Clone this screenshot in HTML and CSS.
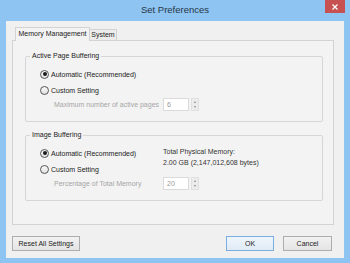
FILE: index.html
```html
<!DOCTYPE html>
<html lang="en">
<head>
    <meta charset="UTF-8">
    <title>Set Preferences</title>
    <link rel="stylesheet" href="styles.css">
</head>
<body>
    <div class="window">
        <div class="titlebar">
            <span></span>
            <span class="title">Set Preferences</span>
            <span class="close">
                <svg width="6" height="6" viewBox="0 0 6 6"><path d="M0.5 0.5L5.5 5.5M5.5 0.5L0.5 5.5" stroke="#fff" stroke-width="1.2"/></svg>
            </span>
        </div>
        <div class="client">
            <div class="tabs">
                <div class="tab active">Memory Management</div>
                <div class="tab">System</div>
            </div>
            <div class="panel">
                <fieldset class="group">
                    <legend>Active Page Buffering</legend>
                    <div class="option first"><span class="radio on"></span>Automatic (Recommended)</div>
                    <div class="option second"><span class="radio"></span>Custom Setting</div>
                    <div class="sub-label">Maximum number of active pages</div>
                    <div class="spin-field">
                        <div class="input">6</div>
                        <div class="spin"><span class="up"></span><span class="down"></span></div>
                    </div>
                </fieldset>

                <fieldset class="group lower">
                    <legend>Image Buffering</legend>
                    <div class="option first"><span class="radio on"></span>Automatic (Recommended)</div>
                    <div class="info">Total Physical Memory:<br>2.00 GB (2,147,012,608 bytes)</div>
                    <div class="option second"><span class="radio"></span>Custom Setting</div>
                    <div class="sub-label">Percentage of Total Memory</div>
                    <div class="spin-field">
                        <div class="input">20</div>
                        <div class="spin"><span class="up"></span><span class="down"></span></div>
                    </div>
                </fieldset>
            </div>
            <div class="actions">
                <button class="btn reset">Reset All Settings</button>
                <button class="btn ok">OK</button>
                <button class="btn cancel">Cancel</button>
            </div>
        </div>
    </div>
</body>
</html>
```

FILE: styles.css
```css
body {
    margin: 0;
    font-family: "Liberation Sans", Arial, sans-serif;
}
.window {
    width: 350px;
    height: 263px;
    box-sizing: border-box;
    background-color: #8ec4f2;
    padding: 0 6px 5px 6px;
    display: flex;
    flex-direction: column;
}
.titlebar {
    height: 21px;
    flex: none;
    display: grid;
    grid-template-columns: 1fr auto 1fr;
}
.title {
    font-size: 9.5px;
    line-height: 20px;
    color: #263646;
}
.close {
    justify-self: end;
    align-self: start;
    margin-right: -1px;
    width: 20px;
    height: 13px;
    background-color: #c75050;
    display: flex;
    align-items: center;
    justify-content: center;
}
.client {
    flex: 1;
    background-color: #f0f0f0;
    padding: 6px 10px 0 6px;
    display: flex;
    flex-direction: column;
    font-size: 7px;
    color: #222;
}
.tabs {
    height: 13px;
    flex: none;
    display: flex;
    align-items: flex-end;
    padding-left: 3px;
    position: relative;
    z-index: 1;
}
.tab {
    box-sizing: border-box;
    height: 11px;
    width: 28px;
    border: 1px solid #d3d3d3;
    border-bottom: none;
    background-color: #ececec;
    text-align: center;
    line-height: 10px;
    margin-left: -1px;
}
.tab.active {
    height: 14px;
    width: 75px;
    margin-left: 0;
    margin-bottom: -1px;
    background-color: #f3f3f3;
    line-height: 12px;
    position: relative;
    z-index: 1;
}
.panel {
    height: 185px;
    flex: none;
    box-sizing: border-box;
    border: 1px solid #d3d3d3;
    background-color: #f3f3f3;
    padding: 10px 11px 0 12px;
}
.group {
    margin: 0;
    width: 298px;
    box-sizing: border-box;
    padding: 5px 0 10px 4px;
    border: 1px solid #d6d6d6;
    border-radius: 2px;
    display: grid;
    grid-template-columns: 133px 1fr;
    grid-template-rows: 16px 16px 13px;
    align-items: center;
}
.group.lower {
    margin-top: 8px;
}
.group legend {
    font-size: 7px;
    line-height: 10px;
    padding: 0 2px;
    margin-left: 0;
}
.option {
    grid-column: 1;
    display: flex;
    align-items: center;
    gap: 2px;
    padding-left: 10px;
}
.option.first {
    grid-row: 1;
}
.option.second {
    grid-row: 2;
}
.radio {
    width: 9px;
    height: 9px;
    box-sizing: border-box;
    border-radius: 50%;
    border: 1px solid #555;
    background: linear-gradient(#fafafa, #e0e0e0);
    display: flex;
    align-items: center;
    justify-content: center;
}
.radio.on::after {
    content: "";
    width: 4px;
    height: 4px;
    border-radius: 50%;
    background-color: #1a1a1a;
}
.info {
    grid-column: 2;
    grid-row: 1 / 3;
    align-self: start;
    padding-top: 1px;
    line-height: 11px;
    color: #333;
}
.sub-label {
    grid-column: 1;
    grid-row: 3;
    padding-left: 24px;
    color: #a6a6a6;
}
.spin-field {
    grid-column: 2;
    grid-row: 3;
    display: flex;
    gap: 2px;
    height: 13px;
}
.input {
    width: 26px;
    box-sizing: border-box;
    border: 1px solid #dadada;
    background-color: #fff;
    color: #999;
    padding-left: 3px;
    line-height: 11px;
}
.spin {
    width: 8px;
    display: flex;
    flex-direction: column;
    border: 1px solid #e0e0e0;
    box-sizing: border-box;
    background-color: #ececec;
}
.spin span {
    flex: 1;
    display: flex;
    align-items: center;
    justify-content: center;
}
.spin .up::after {
    content: "";
    border-left: 1.5px solid transparent;
    border-right: 1.5px solid transparent;
    border-bottom: 2px solid #8a8a8a;
}
.spin .down::after {
    content: "";
    border-left: 1.5px solid transparent;
    border-right: 1.5px solid transparent;
    border-top: 2px solid #8a8a8a;
}
.actions {
    display: flex;
    margin-top: 11px;
    padding-right: 2px;
}
.btn {
    height: 15px;
    box-sizing: border-box;
    padding: 0;
    border: 1px solid #adadad;
    background: linear-gradient(#f2f2f2, #e4e4e4);
    font-family: "Liberation Sans", Arial, sans-serif;
    font-size: 7px;
    color: #222;
}
.btn.reset {
    width: 68px;
}
.btn.ok {
    width: 48px;
    margin-left: auto;
    border-color: #7aaee0;
    background: linear-gradient(#eef5fc, #e0ebf6);
}
.btn.cancel {
    width: 49px;
    margin-left: 9px;
}
```
